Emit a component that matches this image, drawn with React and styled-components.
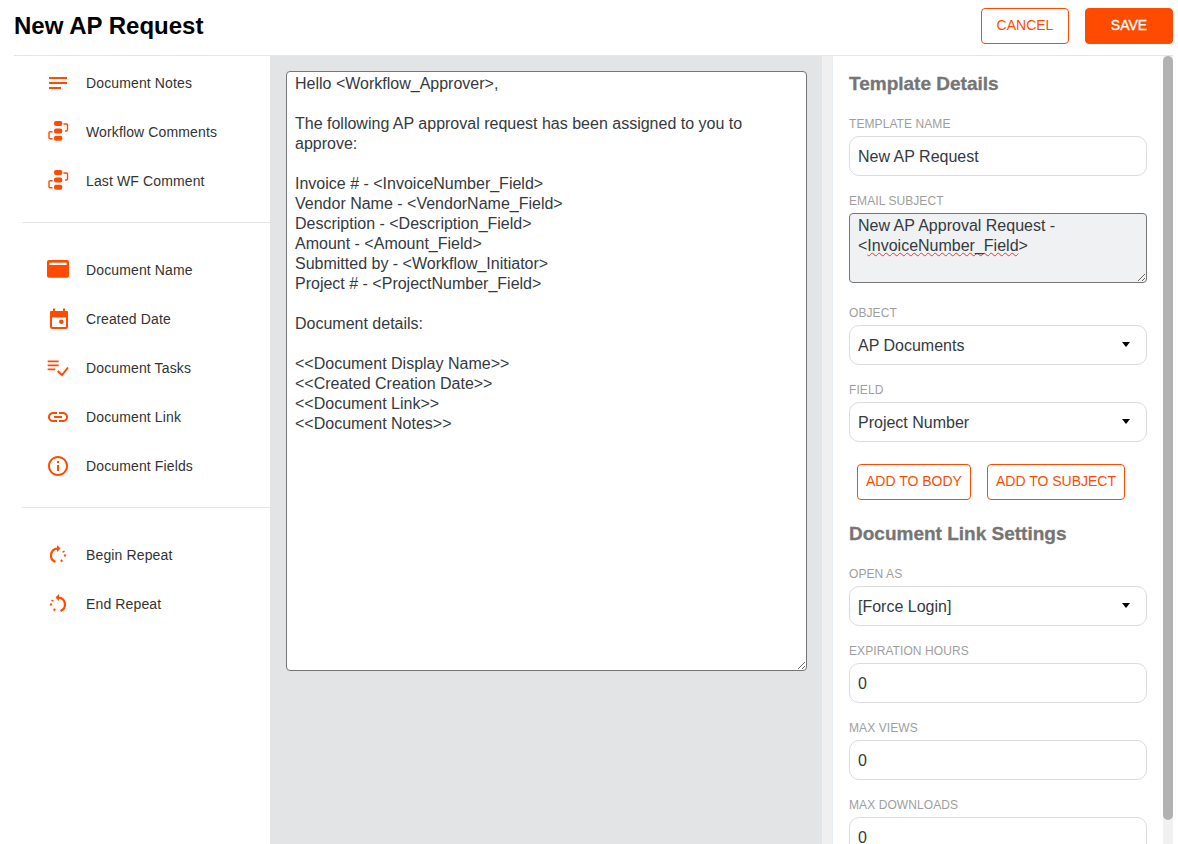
import styled, { createGlobalStyle } from "styled-components";
import { MdNotes, MdLink, MdInfoOutline } from "react-icons/md";

const ACCENT = "#ff4b00";

const GlobalStyle = createGlobalStyle`
  * {
    box-sizing: border-box;
  }
  html, body {
    margin: 0;
    height: 100%;
    overflow: hidden;
    background: #ffffff;
    font-family: "Liberation Sans", Arial, sans-serif;
  }
  #root {
    height: 100%;
  }
`;

const BODY_TEXT = `Hello <Workflow_Approver>,

The following AP approval request has been assigned to you to approve:

Invoice # - <InvoiceNumber_Field>
Vendor Name - <VendorName_Field>
Description - <Description_Field>
Amount - <Amount_Field>
Submitted by - <Workflow_Initiator>
Project # - <ProjectNumber_Field>

Document details:

<<Document Display Name>>
<<Created Creation Date>>
<<Document Link>>
<<Document Notes>>`;

function FlowIcon() {
  return (
    <svg width="24" height="24" viewBox="0 0 24 24" fill={ACCENT}>
      <rect x="8" y="1" width="8.300" height="5" rx="2" />
      <rect x="8" y="8.500" width="8.300" height="5" rx="2" />
      <rect x="8" y="15.700" width="8.300" height="5" rx="2" />
      <path d="M17.500 4h3a1 1 0 0 1 1 1v5a1 1 0 0 1-1 1h-1.500" fill="none" stroke={ACCENT} strokeWidth="1.400" />
      <path d="M6.500 11.700h-2.500a1 1 0 0 0-1 1v5a1 1 0 0 0 1 1h2.500" fill="none" stroke={ACCENT} strokeWidth="1.400" />
    </svg>
  );
}

function CardIcon() {
  return (
    <svg width="24" height="24" viewBox="0 0 24 24">
      <rect x="1" y="2" width="22" height="17.700" rx="2" fill={ACCENT} />
      <rect x="3.300" y="4.700" width="17.400" height="2.300" fill="#ffffff" />
    </svg>
  );
}

function DateIcon() {
  return (
    <svg width="24" height="24" viewBox="0 0 24 24" fill={ACCENT}>
      <rect x="5" y="5" width="16" height="16" rx="1.500" fill="none" stroke={ACCENT} strokeWidth="2" />
      <rect x="4" y="4" width="18" height="6.500" rx="1" />
      <rect x="7" y="1.500" width="2" height="3" />
      <rect x="17" y="1.500" width="2" height="3" />
      <circle cx="15.300" cy="14.700" r="2.300" />
    </svg>
  );
}

function TasksIcon() {
  return (
    <svg width="24" height="24" viewBox="0 0 24 24" fill="none" stroke={ACCENT} strokeWidth="1.700">
      <path d="M1.700 5.300h11M1.700 9.300h11M1.700 13.300h7.600" />
      <path d="M11.700 15l4.300 4 6-7.500" strokeWidth="2" />
    </svg>
  );
}

function RepeatIcon({ flip }) {
  return (
    <RepeatSvg $flip={flip} width="24" height="24" viewBox="0 0 24 24" fill="none" stroke={ACCENT} strokeWidth="2.200">
      <path d="M11.500 5.500A7 7 0 0 0 9.500 19" />
      <path d="M11 2l3.500 3.500L11 9z" fill={ACCENT} stroke="none" />
      <path d="M17.200 7.900l.7 1.400M19 11.400v2M16.300 17.100l-1.400 1.200" />
    </RepeatSvg>
  );
}

const GROUPS = [
  [
    { label: "Document Notes", icon: <MdNotes size={24} color={ACCENT} /> },
    { label: "Workflow Comments", icon: <FlowIcon /> },
    { label: "Last WF Comment", icon: <FlowIcon /> },
  ],
  [
    { label: "Document Name", icon: <CardIcon /> },
    { label: "Created Date", icon: <DateIcon /> },
    { label: "Document Tasks", icon: <TasksIcon /> },
    { label: "Document Link", icon: <MdLink size={24} color={ACCENT} /> },
    { label: "Document Fields", icon: <MdInfoOutline size={24} color={ACCENT} /> },
  ],
  [
    { label: "Begin Repeat", icon: <RepeatIcon /> },
    { label: "End Repeat", icon: <RepeatIcon flip /> },
  ],
];

export default function App() {
  return (
    <>
      <GlobalStyle />
      <Page>
        <Header>
          <Title>New AP Request</Title>
          <Actions>
            <OutlineButton>CANCEL</OutlineButton>
            <SaveButton>SAVE</SaveButton>
          </Actions>
        </Header>
        <Columns>
          <Sidebar>
            {GROUPS.map((group, i) => (
              <SideGroup key={i}>
                {group.map((item) => (
                  <SideItem key={item.label}>
                    <IconSlot>{item.icon}</IconSlot>
                    {item.label}
                  </SideItem>
                ))}
              </SideGroup>
            ))}
          </Sidebar>
          <Editor>
            <BodyArea defaultValue={BODY_TEXT} spellCheck={false} />
          </Editor>
          <EditorTrack />
          <Panel>
            <Heading>Template Details</Heading>
            <Field>
              <Label>Template Name</Label>
              <Input defaultValue="New AP Request" />
            </Field>
            <Field>
              <Label>Email Subject</Label>
              <SubjectBox>
                New AP Approval Request - {"<"}
                <Misspelt>InvoiceNumber_Field</Misspelt>
                {">"}
              </SubjectBox>
            </Field>
            <Field>
              <Label>Object</Label>
              <SelectBox>
                <Select defaultValue="AP Documents">
                  <option>AP Documents</option>
                </Select>
              </SelectBox>
            </Field>
            <Field>
              <Label>Field</Label>
              <SelectBox>
                <Select defaultValue="Project Number">
                  <option>Project Number</option>
                </Select>
              </SelectBox>
            </Field>
            <ButtonRow>
              <SmallButton>ADD TO BODY</SmallButton>
              <SmallButton>ADD TO SUBJECT</SmallButton>
            </ButtonRow>
            <Heading>Document Link Settings</Heading>
            <Field>
              <Label>Open As</Label>
              <SelectBox>
                <Select defaultValue="[Force Login]">
                  <option>[Force Login]</option>
                </Select>
              </SelectBox>
            </Field>
            <Field>
              <Label>Expiration Hours</Label>
              <Input defaultValue="0" />
            </Field>
            <Field>
              <Label>Max Views</Label>
              <Input defaultValue="0" />
            </Field>
            <Field>
              <Label>Max Downloads</Label>
              <Input defaultValue="0" />
            </Field>
          </Panel>
          <PanelTrack>
            <PanelThumb />
          </PanelTrack>
        </Columns>
      </Page>
    </>
  );
}

const RepeatSvg = styled.svg`
  transform: ${(props) => (props.$flip ? "scaleX(-1)" : "none")};
`;

const Page = styled.div`
  display: flex;
  flex-direction: column;
  height: 100vh;
  padding: 0 5px 0 14px;
`;

const Header = styled.header`
  display: flex;
  flex: none;
  align-items: center;
  justify-content: space-between;
  height: 56px;
  padding-bottom: 4px;
  border-bottom: 1px solid #e4e5e7;
`;

const Title = styled.h1`
  margin: 0;
  font-size: 24px;
  font-weight: 700;
  color: #000000;
`;

const Actions = styled.div`
  display: flex;
  gap: 16px;
`;

const OutlineButton = styled.button`
  width: 88px;
  height: 36px;
  padding: 0 0 2px;
  border: 1px solid ${ACCENT};
  border-radius: 4px;
  background: #ffffff;
  font: 400 14px "Liberation Sans", Arial, sans-serif;
  color: ${ACCENT};
`;

const SaveButton = styled(OutlineButton)`
  background: ${ACCENT};
  color: #ffffff;
  -webkit-text-stroke: 0.3px #ffffff;
`;

const Columns = styled.div`
  display: flex;
  flex: 1;
  min-height: 0;
`;

const Sidebar = styled.nav`
  flex: none;
  width: 256px;
  padding: 2px 0 0 8px;
`;

const SideGroup = styled.div`
  padding-bottom: 17px;
  margin-bottom: 22px;
  border-bottom: 1px solid #e4e5e7;

  &:last-child {
    border-bottom: 0;
  }
`;

const SideItem = styled.div`
  display: flex;
  align-items: center;
  height: 49px;
  font-size: 14px;
  letter-spacing: 0.13px;
  color: #333333;
`;

const IconSlot = styled.span`
  display: flex;
  flex: none;
  align-items: center;
  justify-content: center;
  width: 24px;
  height: 24px;
  margin: 0 16px 0 24px;
`;

const Editor = styled.main`
  flex: none;
  width: 552px;
  padding: 15px 0 0 16px;
  background: #e3e4e6;
`;

const EditorTrack = styled.div`
  flex: none;
  width: 11px;
  border-right: 1px solid #e8edf3;
  background: #f0f0f0;
`;

const BodyArea = styled.textarea`
  display: block;
  width: 521px;
  height: 600px;
  padding: 2px 8px;
  border: 1px solid #767676;
  border-radius: 4px;
  background: #ffffff;
  font: 400 16px/20px "Liberation Sans", Arial, sans-serif;
  color: #343a40;
  outline: none;
`;

const Panel = styled.aside`
  flex: 1;
  min-width: 0;
  padding: 14px 16px;
  overflow: hidden;
`;

const PanelTrack = styled.div`
  flex: none;
  width: 10px;
  background: #f1f1f1;
`;

const PanelThumb = styled.div`
  height: 764px;
  border-radius: 6px;
  background: #b2b2b2;
`;

const Heading = styled.h2`
  margin: 0 0 19px;
  font-size: 19px;
  font-weight: 700;
  line-height: 28px;
  color: #757575;
  -webkit-text-stroke: 0.3px #757575;
`;

const Field = styled.div`
  margin-bottom: 18px;
`;

const Label = styled.label`
  display: block;
  margin-bottom: 5px;
  font-size: 12px;
  line-height: 14px;
  letter-spacing: 0.08px;
  text-transform: uppercase;
  color: #9e9e9e;
`;

const Input = styled.input`
  display: block;
  width: 298px;
  height: 40px;
  padding: 2px 8px 0;
  border: 1px solid #dcdcdc;
  border-radius: 10px;
  background: #ffffff;
  font: 400 16px "Liberation Sans", Arial, sans-serif;
  color: #343a40;
  outline: none;
`;

const SubjectBox = styled.div`
  width: 298px;
  height: 70px;
  margin-bottom: 23px;
  padding: 2px 8px;
  border: 1px solid #767676;
  border-radius: 4px;
  background: #eff1f3;
  font-size: 16px;
  line-height: 20px;
  color: #343a40;
  resize: both;
  overflow: auto;
`;

const Misspelt = styled.span`
  text-decoration: underline wavy #e53935 1px;
  text-underline-offset: 1px;
`;

const SelectBox = styled.div`
  position: relative;
  width: 298px;

  &::after {
    content: "";
    position: absolute;
    top: 17px;
    right: 17px;
    border-top: 5px solid #000000;
    border-right: 4px solid transparent;
    border-left: 4px solid transparent;
    pointer-events: none;
  }
`;

const Select = styled.select`
  display: block;
  width: 100%;
  height: 40px;
  padding: 0 8px;
  border: 1px solid #dcdcdc;
  border-radius: 10px;
  background: #ffffff;
  font: 400 16px "Liberation Sans", Arial, sans-serif;
  color: #343a40;
  appearance: none;
  outline: none;
`;

const ButtonRow = styled.div`
  display: flex;
  gap: 16px;
  padding-left: 8px;
  margin: 22px 0 20px;
`;

const SmallButton = styled(OutlineButton)`
  width: auto;
  padding: 0 8px 2px;
`;
